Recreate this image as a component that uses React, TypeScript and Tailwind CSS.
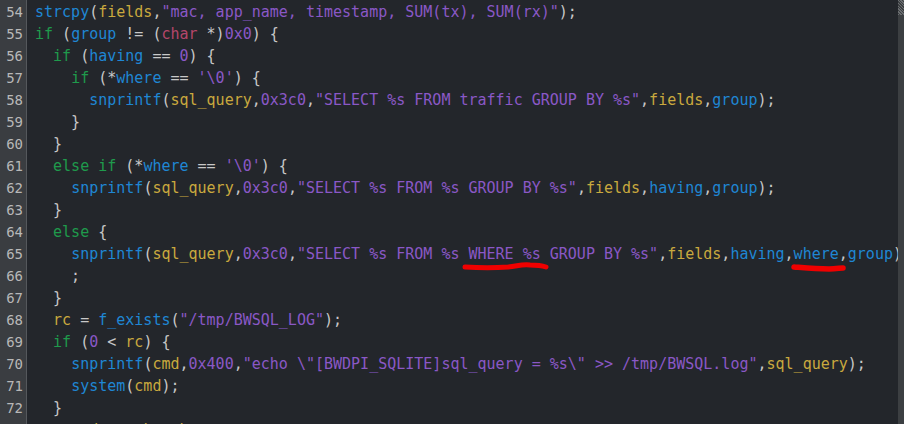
type Tok = [string, string];

const C: Record<string, string> = {
  f: "text-[#1f87d4]",
  a: "text-[#1f87d4]",
  k: "text-[#1f9a4c]",
  v: "text-[#c9a93e]",
  s: "text-[#8a58c6]",
  t: "text-[#b5466a]",
  p: "text-[#c8c8c8]",
};

const lines: { n: number; toks: Tok[] }[] = [
  { n: 54, toks: [["f", "strcpy"], ["p", "("], ["v", "fields"], ["p", ","], ["s", '"mac, app_name, timestamp, SUM(tx), SUM(rx)"'], ["p", ");"]] },
  { n: 55, toks: [["k", "if"], ["p", " ("], ["a", "group"], ["p", " != ("], ["t", "char"], ["p", " *)"], ["s", "0x0"], ["p", ") {"]] },
  { n: 56, toks: [["p", "  "], ["k", "if"], ["p", " ("], ["a", "having"], ["p", " == "], ["s", "0"], ["p", ") {"]] },
  { n: 57, toks: [["p", "    "], ["k", "if"], ["p", " (*"], ["a", "where"], ["p", " == "], ["s", "'\\0'"], ["p", ") {"]] },
  {
    n: 58,
    toks: [["p", "      "], ["f", "snprintf"], ["p", "("], ["v", "sql_query"], ["p", ","], ["s", "0x3c0"], ["p", ","], ["s", '"SELECT %s FROM traffic GROUP BY %s"'], ["p", ","], ["v", "fields"], ["p", ","], ["a", "group"], ["p", ");"]],
  },
  { n: 59, toks: [["p", "    }"]] },
  { n: 60, toks: [["p", "  }"]] },
  { n: 61, toks: [["p", "  "], ["k", "else if"], ["p", " (*"], ["a", "where"], ["p", " == "], ["s", "'\\0'"], ["p", ") {"]] },
  {
    n: 62,
    toks: [["p", "    "], ["f", "snprintf"], ["p", "("], ["v", "sql_query"], ["p", ","], ["s", "0x3c0"], ["p", ","], ["s", '"SELECT %s FROM %s GROUP BY %s"'], ["p", ","], ["v", "fields"], ["p", ","], ["a", "having"], ["p", ","], ["a", "group"], ["p", ");"]],
  },
  { n: 63, toks: [["p", "  }"]] },
  { n: 64, toks: [["p", "  "], ["k", "else"], ["p", " {"]] },
  {
    n: 65,
    toks: [["p", "    "], ["f", "snprintf"], ["p", "("], ["v", "sql_query"], ["p", ","], ["s", "0x3c0"], ["p", ","], ["s", '"SELECT %s FROM %s WHERE %s GROUP BY %s"'], ["p", ","], ["v", "fields"], ["p", ","], ["a", "having"], ["p", ","], ["a", "where"], ["p", ","], ["a", "group"], ["p", ")"]],
  },
  { n: 66, toks: [["p", "    ;"]] },
  { n: 67, toks: [["p", "  }"]] },
  { n: 68, toks: [["p", "  "], ["v", "rc"], ["p", " = "], ["f", "f_exists"], ["p", "("], ["s", '"/tmp/BWSQL_LOG"'], ["p", ");"]] },
  { n: 69, toks: [["p", "  "], ["k", "if"], ["p", " ("], ["s", "0"], ["p", " < "], ["v", "rc"], ["p", ") {"]] },
  {
    n: 70,
    toks: [["p", "    "], ["f", "snprintf"], ["p", "("], ["v", "cmd"], ["p", ","], ["s", "0x400"], ["p", ","], ["s", '"echo \\"[BWDPI_SQLITE]sql_query = %s\\" >> /tmp/BWSQL.log"'], ["p", ","], ["v", "sql_query"], ["p", ");"]],
  },
  { n: 71, toks: [["p", "    "], ["f", "system"], ["p", "("], ["v", "cmd"], ["p", ");"]] },
  { n: 72, toks: [["p", "  }"]] },
  { n: 73, toks: [["p", "  "], ["v", "acc_d"], ["p", " = "], ["v", "ark"], ["p", " + "], ["v", "b"], ["p", ";"]] },
];

export default function App() {
  return (
    <div className="relative flex h-[424px] w-[904px] overflow-hidden bg-[#23262b] font-['DejaVu_Sans_Mono','Liberation_Mono',monospace] text-[15px]">
      {/* gutter */}
      <div className="w-[27px] shrink-0 border-r border-[#55585c] bg-[#3a3d41] pt-[1px]">
        {lines.map((l) => (
          <div key={l.n} className="h-[22px] pr-[3px] text-right text-[14px] leading-[22px] text-[#b8b8b8]">
            {l.n}
          </div>
        ))}
      </div>

      {/* code */}
      <div className="min-w-0 flex-1 overflow-hidden pl-[8px] pt-[1px]">
        {lines.map((l) => (
          <div key={l.n} className="h-[22px] whitespace-pre leading-[22px]">
            {l.toks.map(([c, t], i) => (
              <span key={i} className={C[c]}>
                {t}
              </span>
            ))}
          </div>
        ))}
      </div>

      {/* scrollbar */}
      <div className="w-[6px] shrink-0 bg-[#3c3f42]">
        <div className="h-[15px] bg-[repeating-linear-gradient(45deg,#6a6d70_0px,#6a6d70_1px,#3c3f42_1px,#3c3f42_2px)]" />
      </div>

      {/* red hand-drawn underlines */}
      <svg className="pointer-events-none absolute left-0 top-0" width="904" height="424">
        <path d="M465 267 C 480 268, 495 268, 508 267 C 518 266, 522 264, 530 265 C 538 265, 543 266, 546 267" stroke="#f00000" strokeWidth="5" fill="none" strokeLinecap="round" />
        <path d="M794 267 C 806 268, 816 269, 829 269 C 836 269, 840 268, 843 268" stroke="#f00000" strokeWidth="5.5" fill="none" strokeLinecap="round" />
      </svg>
    </div>
  );
}
